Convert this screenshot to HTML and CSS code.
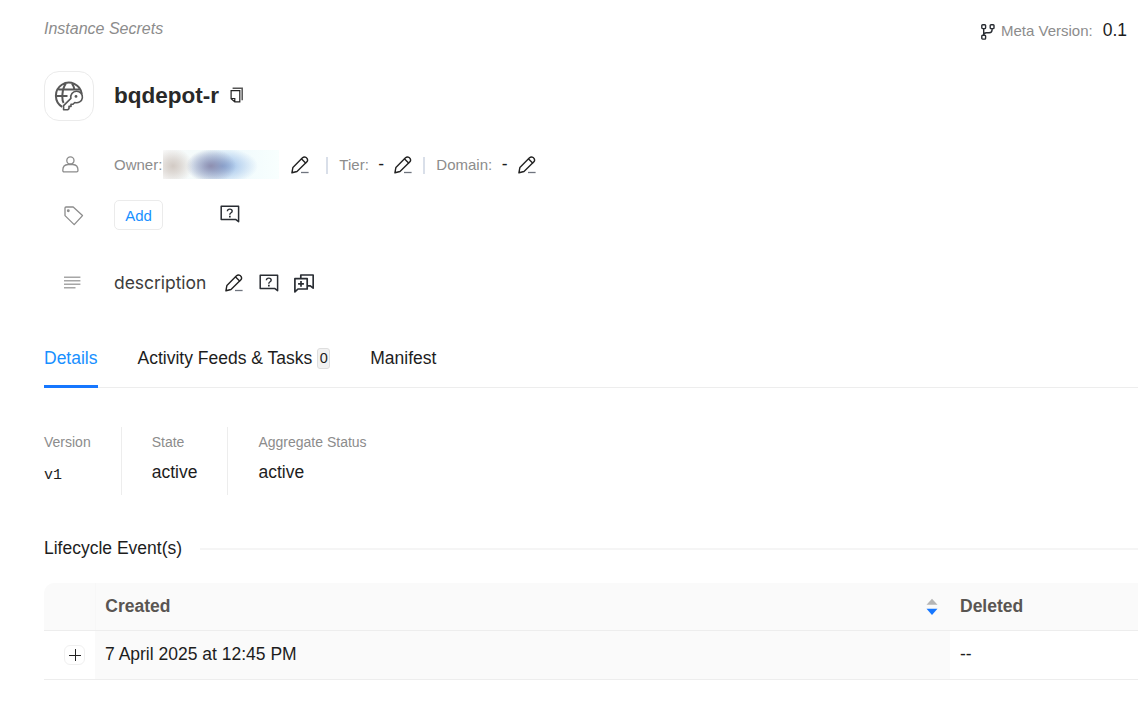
FILE: index.html
```
<!DOCTYPE html>
<html lang="en">
<head>
<meta charset="utf-8">
<title>bqdepot-r</title>
<link rel="stylesheet" href="styles.css">
</head>
<body>
<svg class="sprite" aria-hidden="true">
  <symbol id="pencil" viewBox="0 0 18 18">
    <g fill="none" stroke="#222" stroke-width="1.4" stroke-linejoin="round" stroke-linecap="round">
      <path d="M.9 16.8 1.9 11.4 11.5 1.8Q13.2.2 15.2 1.5 17.6 3.5 15.9 5.8L6 15.5Z"/>
      <path d="M10.6 2.9l4 4"/>
    </g>
    <path d="M10 16.5h7.6" stroke="#6f747e" stroke-width="1.3"/>
  </symbol>
  <symbol id="question" viewBox="0 0 20 18">
    <path d="M1.2 1.2h17.4v15.5l-3-2.3H1.2z" fill="none" stroke="#292d33" stroke-width="1.5" stroke-linejoin="round"/>
    <path d="M7.4 6.2Q7.5 4.1 9.8 4.1T12.2 6.1Q12.2 7.2 10.8 8 9.8 8.6 9.8 9.7" fill="none" stroke="#292d33" stroke-width="1.4"/>
    <path d="M9 10.8h1.7v1.7H9z" fill="#292d33"/>
  </symbol>
</svg>
<main class="page">
  <header class="topbar">
    <span class="crumb">Instance Secrets</span>
    <div class="meta">
      <svg class="branch" viewBox="0 0 14 16" fill="none" stroke="#292d33" stroke-width="1.4"><rect x=".8" y=".8" width="3.8" height="3.8" rx=".8"/><rect x="9.2" y=".8" width="3.8" height="3.8" rx=".8"/><rect x=".8" y="11.3" width="3.8" height="3.8" rx=".8"/><path d="M2.7 4.6v6.7M11.1 4.6v1.2Q11.1 8.6 8.2 8.8H5.4Q2.7 9 2.7 11.3"/></svg>
      <span class="meta-label">Meta Version:</span>
      <span class="meta-value">0.1</span>
    </div>
  </header>

  <section class="title-row">
    <div class="logo">
      <svg width="30" height="30" viewBox="0 0 30 30" fill="none" stroke="#585858" stroke-width="2">
        <path d="M27.8 13A13 13 0 1 0 8.2 25.8M2 15H13.5M4.3 8.4H25.6M11.8 2.6C7.8 8 7.6 19 9.6 22M18 2.6Q19.8 4.8 20.5 9"/>
        <path d="M22.4 10.2a5.8 5.8 0 1 1-1.6 11.3l-1.8 1.8h-2v2.1h-2v2.2l-1.2 1.2H9.6v-4.2l7.3-7.2A5.8 5.8 0 0 1 22.4 10.2Z" fill="#fff" stroke-width="1.6" stroke-linejoin="round"/>
        <circle cx="22" cy="15.4" r="1.4" fill="#585858" stroke="none"/>
      </svg>
    </div>
    <h1 class="title">bqdepot-r</h1>
    <svg class="copy" width="14" height="16" viewBox="0 0 14 16" fill="none"><path d="M2.6 1.2h9.6v12.1" stroke="#555" stroke-width="1.5"/><path d="M1.1 3.6h8.7v11.2H4.8l-3.7-3zM1.1 11.5h3.7v3.3" stroke="#222" stroke-width="1.2"/></svg>
  </section>

  <section class="row owner">
    <div class="lead"><svg class="person" width="18" height="17" viewBox="0 0 18 17" fill="none" stroke="#8c8c8c" stroke-width="1.3"><circle cx="8.4" cy="4.4" r="3.6"/><path d="M.8 14.2Q.8 8.7 6 8.5h4.8q5.2.2 5.2 5.7 0 1.7-1.4 1.7H2.2Q.8 15.9.8 14.2Z"/></svg></div>
    <span class="label">Owner:</span>
    <div class="masked"></div>
    <svg class="pencil"><use href="#pencil"/></svg>
    <i class="bar bar-first"></i>
    <span class="label">Tier:</span><span class="dash">-</span>
    <svg class="pencil"><use href="#pencil"/></svg>
    <i class="bar"></i>
    <span class="label">Domain:</span><span class="dash">-</span>
    <svg class="pencil"><use href="#pencil"/></svg>
  </section>

  <section class="row tags">
    <div class="lead"><svg class="tag" width="20" height="20" viewBox="0 0 20 20" fill="none" stroke="#8c8c8c" stroke-width="1.3" stroke-linejoin="round"><path d="M1 2Q1 1 2 1h7.2l9.3 8.6-8.3 9L1 9.6Z"/><circle cx="4.3" cy="4.7" r=".8"/></svg></div>
    <button class="add">Add</button>
    <svg class="question"><use href="#question"/></svg>
  </section>

  <section class="row desc">
    <div class="lead"><svg class="lines" width="17" height="13" viewBox="0 0 17 13" stroke="#a6a6a6" stroke-width="1.6"><path d="M0 1.3h16.4M0 4.8h16.4M0 8.2h16.4M0 11.7h11.5"/></svg></div>
    <span class="description">description</span>
    <svg class="pencil"><use href="#pencil"/></svg>
    <svg class="question"><use href="#question"/></svg>
    <svg class="request" width="20" height="19" viewBox="0 0 20 19" fill="none" stroke="#292d33" stroke-width="1.7" stroke-linejoin="round"><path d="M6.8 4.6V1h12.4v13.2l-2.9-2.4h-3"/><path d="M.9 4.7h12.3V15H4l-3.1 2.9zM7 6.9v5.8M4.1 9.8h5.8"/></svg>
  </section>

  <nav class="tabs">
    <a class="tab active">Details</a>
    <a class="tab">Activity Feeds &amp; Tasks<span class="count">0</span></a>
    <a class="tab">Manifest</a>
  </nav>

  <section class="facts">
    <div class="fact"><span class="fact-name">Version</span><span class="fact-value mono">v1</span></div>
    <div class="fact"><span class="fact-name">State</span><span class="fact-value">active</span></div>
    <div class="fact"><span class="fact-name">Aggregate Status</span><span class="fact-value">active</span></div>
  </section>

  <h2 class="divider">Lifecycle Event(s)</h2>

  <div class="table">
    <div class="tr head">
      <div class="td expand"></div>
      <div class="td created">Created<svg width="12" height="18" viewBox="0 0 12 18"><path d="M.5 6.7 6 .7l5.5 6z" fill="#b5b5b5"/><path d="M.5 10.7h11L6 16.9z" fill="#1677ff"/></svg></div>
      <div class="td">Deleted</div>
    </div>
    <div class="tr">
      <div class="td expand"><span class="plus"><svg width="12" height="12" viewBox="0 0 12 12" stroke="#222" stroke-width="1"><path d="M0 6.5h12M6.5 0v12"/></svg></span></div>
      <div class="td created sorted">7 April 2025 at 12:45 PM</div>
      <div class="td">--</div>
    </div>
  </div>
</main>
</body>
</html>
```
FILE: styles.css
```
* { box-sizing: border-box; }
body { margin: 0; background: #fff; color: #1d1d1d; font: 17.5px/24px "Liberation Sans", Arial, sans-serif; overflow: hidden; }
svg { display: block; flex: none; }
.sprite { position: absolute; width: 0; height: 0; }
.page { padding-left: 44px; height: 703px; overflow: hidden; white-space: nowrap; }
.topbar { display: flex; justify-content: space-between; height: 71px; padding: 16px 11px 0 0; }
.crumb { margin-top: 1px; font-size: 16px; font-style: italic; color: #8c8c8c; }
.meta { display: flex; align-items: center; height: 28px; }
.branch { width: 14px; height: 16px; margin: 4px 5.5px 0 0; }
.meta-label { font-size: 15px; color: #8c8c8c; margin: 2px 10px 0 0; }
.title-row { display: flex; align-items: center; height: 50px; }
.logo { display: flex; align-items: center; justify-content: center; width: 50px; height: 50px; margin-right: 20px; border: 1px solid #ebebeb; border-radius: 15px; }
.title { margin: 0; font-size: 22.5px; line-height: 30px; color: #292929; }
.copy { margin: 0 0 2px 11px; }
.row { display: flex; align-items: center; }
.lead { flex: none; width: 70px; padding-left: 20px; }
.label { font-size: 15px; color: #8c8c8c; }
.owner { height: 30px; margin-top: 29px; }
.owner .lead { padding: 0 0 2px 18px; }
.masked { width: 116px; height: 29px; margin: 0 12px 1px 1px; background: radial-gradient(ellipse 20px 18px at 10px 16px, #d2cac4, rgba(210,202,196,.65) 40%, rgba(210,202,196,0)), radial-gradient(ellipse 25px 17px at 48px 16px, #8e8fb0, rgba(142,143,176,.55) 40%, rgba(142,143,176,0)), radial-gradient(ellipse 36px 18px at 59px 16px, #86aee0, rgba(139,178,228,.5) 45%, rgba(139,178,228,0)), linear-gradient(90deg, #fafafa, #f4fbfb 30%, #f0fafd 60%, #f8fffe); }
.pencil { width: 18px; height: 18px; }
.bar { width: 2px; height: 17px; margin: 0 11px; background: #d9dfe9; }
.bar-first { margin: 0 11px 0 17px; }
.dash { width: 6px; margin: 0 10px 3px 9.5px; }
.tags { height: 30px; margin-top: 20px; }
.tag { margin-top: 1px; }
.add { width: 49px; height: 30px; padding: 0; border: 1px solid #ebebeb; border-radius: 5px; background: #fff; color: #1890ff; font: 15px "Liberation Sans", Arial, sans-serif; }
.question { width: 20px; height: 18px; }
.tags .question { margin: 0 0 3px 57px; }
.desc { height: 30px; margin-top: 38px; }
.lines { margin-bottom: 1px; }
.description { font: 17.5px/24px Inter, "Liberation Sans", sans-serif; color: #3d3d3d; width: 93px; letter-spacing: -.04px; }
.desc .pencil { margin-left: 18px; }
.desc .question { margin-left: 16px; }
.request { margin-left: 15px; }
.tabs { display: flex; gap: 40px; height: 60px; margin-top: 30px; border-bottom: 1px solid #ededed; }
.tab { display: flex; align-items: center; height: 60px; }
.tab.active { color: #1890ff; border-bottom: 3px solid #1677ff; padding-top: 3px; }
.count { display: flex; align-items: center; justify-content: center; width: 13px; height: 21px; margin: 0 0 0 5px; border: 1px solid #dedede; border-radius: 3px; background: #f2f2f2; font-size: 14.5px; }
.facts { display: flex; height: 68px; margin-top: 39px; }
.fact { display: flex; flex-direction: column; padding: 3px 30px 0 0; margin-right: 30px; border-right: 1px solid #ededed; }
.fact:last-child { border: 0; }
.fact-name { font-size: 14px; color: #8c8c8c; }
.fact-value { margin-top: 6px; }
.mono { font: 15px/26px "Liberation Mono", monospace; margin-top: 9px; }
.divider { display: flex; align-items: center; margin: 41px 0 0; font-size: 17.5px; line-height: 24px; font-weight: 400; }
.divider::after { content: ""; flex: 1; height: 2px; margin: 1px 0 0 18px; background: #f5f5f5; }
.table { margin-top: 23px; }
.tr { display: grid; grid-template-columns: 51px 855px 1fr; height: 49px; border-bottom: 1px solid #ededed; }
.td { display: flex; align-items: center; padding: 0 10px 2px; }
.head { height: 48px; background: #fafafa; border-radius: 10px 0 0 0; color: #595552; font-weight: 700; }
.head .created { justify-content: space-between; padding: 0 12px 2px 9.3px; border-left: 1px solid #f7f7f7; }
.head svg { margin-top: 2px; }
.expand { padding: 0 0 1px 20px; }
.sorted { background: #fafafa; }
.plus { display: flex; align-items: center; justify-content: center; width: 21px; height: 20px; border: 1px solid #f0f0f0; border-radius: 6px; }
```
